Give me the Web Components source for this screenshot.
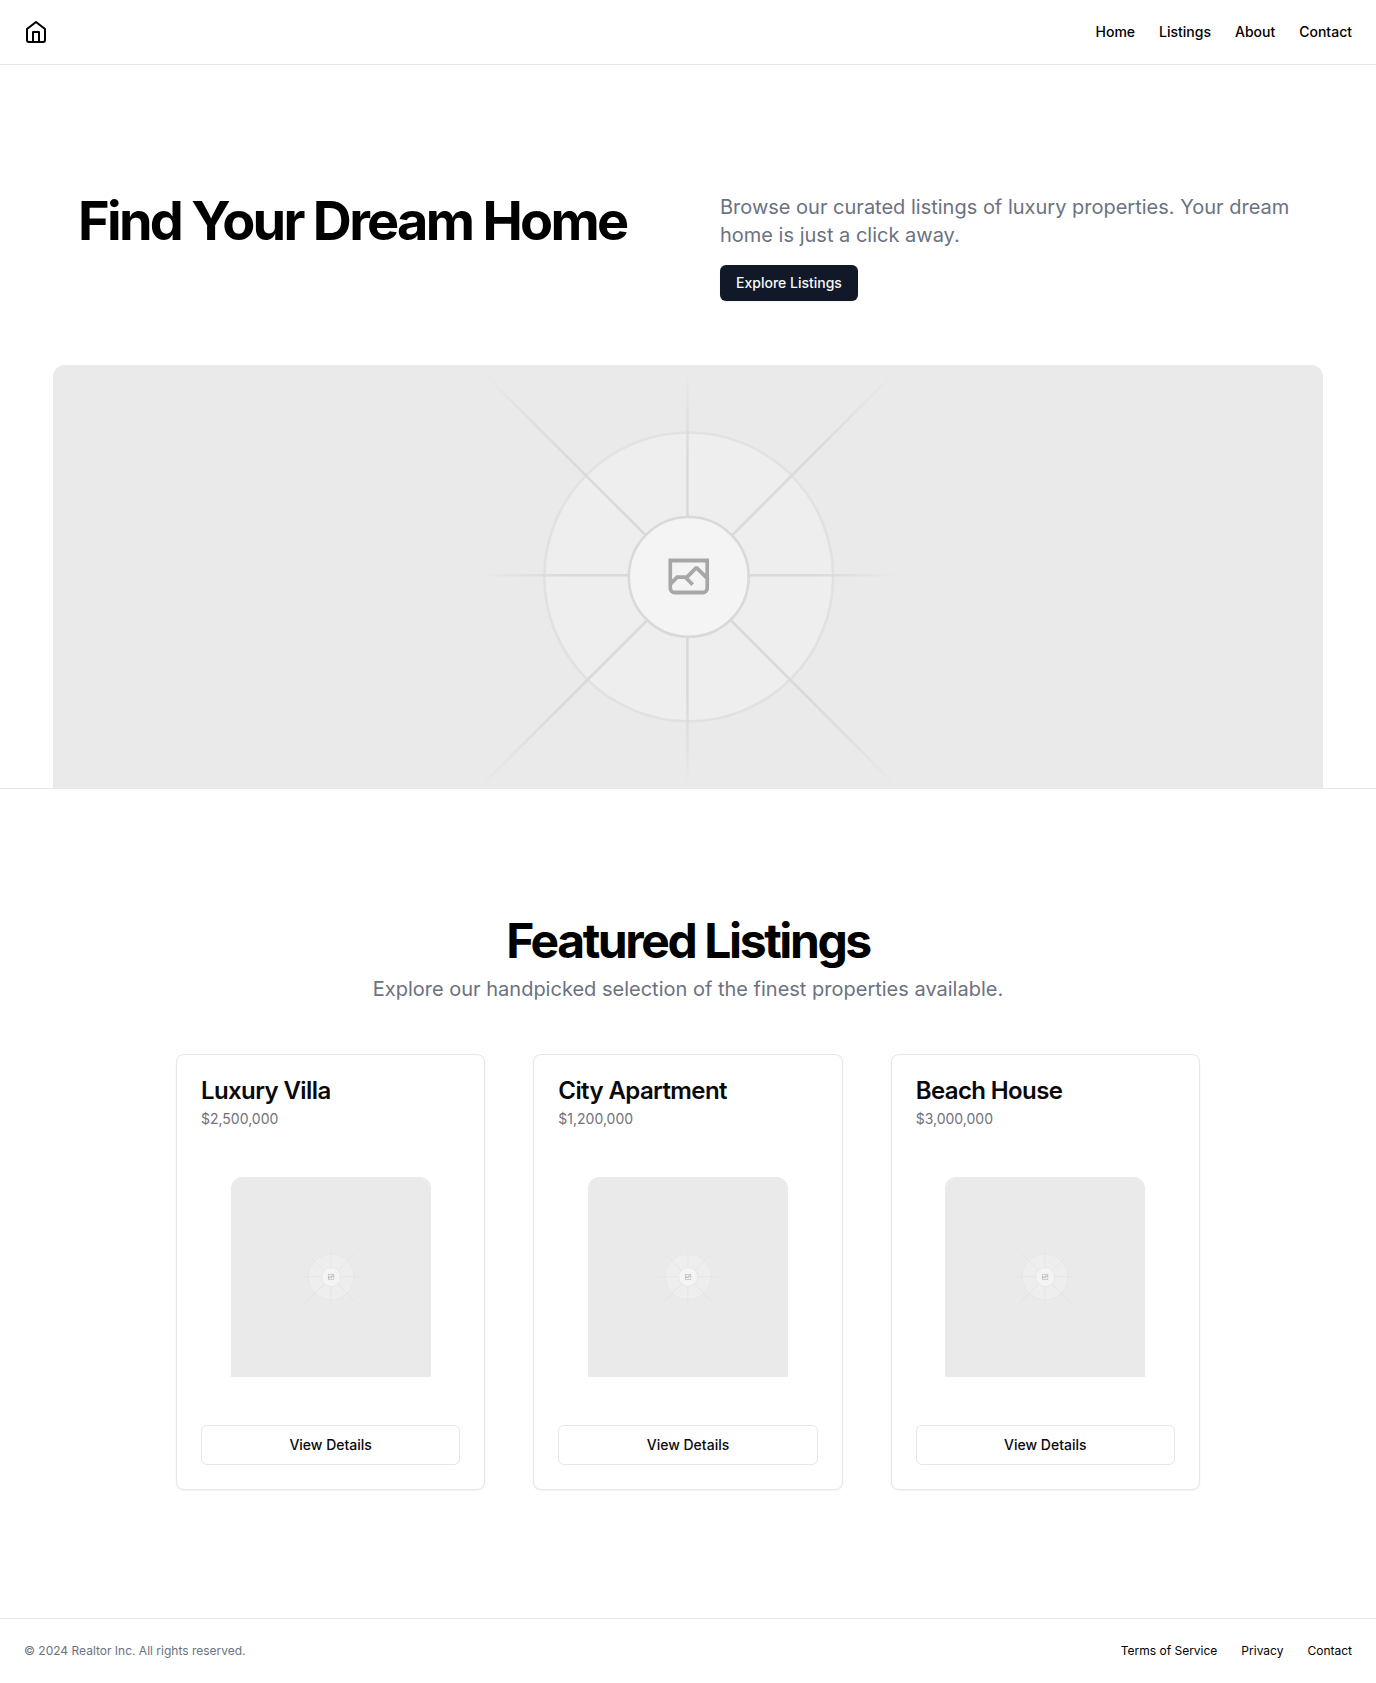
<!DOCTYPE html>
<html lang="en">
<head>
<meta charset="utf-8">
<meta name="viewport" content="width=device-width, initial-scale=1">
<title>Realtor Inc.</title>
<style>
  :root {
    --fg: #09090b;
    --muted: #6b7280;
    --muted-card: #71717a;
    --border: #e5e7eb;
    --tracking-heading: -0.05em;
  }
  body {
    margin: 0;
    background: #fff;
    color: #000;
    font: 400 16px/24px Inter, "Liberation Sans", sans-serif;
  }
</style>
</head>
<body>
<realtor-page>
  <site-header>
    <nav-link href="#home">Home</nav-link>
    <nav-link href="#listings">Listings</nav-link>
    <nav-link href="#about">About</nav-link>
    <nav-link href="#contact">Contact</nav-link>
  </site-header>
  <hero-section id="home">
    <span slot="title">Find Your Dream Home</span>
    <span slot="text">Browse our curated listings of luxury properties. Your dream home is just a click away.</span>
    <span slot="action">Explore Listings</span>
  </hero-section>
  <featured-listings id="listings">
    <span slot="title">Featured Listings</span>
    <span slot="text">Explore our handpicked selection of the finest properties available.</span>
    <listing-card><span slot="name">Luxury Villa</span><span slot="price">$2,500,000</span></listing-card>
    <listing-card><span slot="name">City Apartment</span><span slot="price">$1,200,000</span></listing-card>
    <listing-card><span slot="name">Beach House</span><span slot="price">$3,000,000</span></listing-card>
  </featured-listings>
  <site-footer>
    <span slot="copyright">© 2024 Realtor Inc. All rights reserved.</span>
    <nav-link href="#terms">Terms of Service</nav-link>
    <nav-link href="#privacy">Privacy</nav-link>
    <nav-link href="#contact">Contact</nav-link>
  </site-footer>
</realtor-page>

<script>
  function component(name, markup) {
    const template = document.createElement('template');
    template.innerHTML = markup;
    customElements.define(name, class extends HTMLElement {
      constructor() {
        super();
        this.attachShadow({ mode: 'open' }).append(template.content.cloneNode(true));
      }
      connectedCallback() {
        const link = this.hasAttribute('href') && this.shadowRoot.querySelector('a');
        if (link) link.href = this.getAttribute('href');
      }
    });
  }

  component('realtor-page', `
    <style>
      :host { display: flex; flex-direction: column; min-height: 100vh; }
    </style>
    <slot></slot>`);

  component('nav-link', `
    <style>
      :host { display: block; }
      a { display: block; color: inherit; text-decoration: none; }
      a:hover { text-decoration: underline; text-underline-offset: 4px; }
    </style>
    <a href="#"><slot></slot></a>`);

  component('site-header', `
    <style>
      :host { display: block; }
      header { display: flex; align-items: center; justify-content: space-between; height: 64px; padding: 0 24px; }
      .logo { display: block; color: #000; }
      svg { display: block; width: 24px; height: 24px; }
      nav { display: flex; gap: 24px; font-size: 14px; line-height: 20px; font-weight: 500; }
    </style>
    <header>
      <a class="logo" href="#home" aria-label="Realtor Inc.">
        <svg viewBox="0 0 24 24" fill="none" stroke="currentColor" stroke-width="2" stroke-linecap="round" stroke-linejoin="round" aria-hidden="true">
          <path d="m3 9 9-7 9 7v11a2 2 0 0 1-2 2H5a2 2 0 0 1-2-2z"/>
          <polyline points="9 22 9 12 15 12 15 22"/>
        </svg>
      </a>
      <nav aria-label="Main"><slot></slot></nav>
    </header>`);

  component('placeholder-image', `
    <style>
      :host { display: block; overflow: hidden; border-radius: 12px 12px 0 0; background: #eaeaea; }
      svg { display: block; width: 100%; height: 100%; }
    </style>
    <svg viewBox="0 0 1200 1200" preserveAspectRatio="xMidYMid slice" fill="none" aria-hidden="true">
      <defs>
        <linearGradient id="a" x1="554.061" x2="-.48" y1=".083" y2=".087" gradientUnits="userSpaceOnUse">
          <stop stop-color="#C9C9C9" stop-opacity="0"/><stop offset=".208" stop-color="#C9C9C9"/><stop offset=".792" stop-color="#C9C9C9"/><stop offset="1" stop-color="#C9C9C9" stop-opacity="0"/>
        </linearGradient>
        <linearGradient id="b" x1="796.912" x2="404.507" y1="599.963" y2="599.965" gradientUnits="userSpaceOnUse">
          <stop stop-color="#C9C9C9" stop-opacity="0"/><stop offset=".208" stop-color="#C9C9C9"/><stop offset=".792" stop-color="#C9C9C9"/><stop offset="1" stop-color="#C9C9C9" stop-opacity="0"/>
        </linearGradient>
        <linearGradient id="c" x1="600.792" x2="600.794" y1="403.677" y2="796.082" gradientUnits="userSpaceOnUse">
          <stop stop-color="#C9C9C9" stop-opacity="0"/><stop offset=".208" stop-color="#C9C9C9"/><stop offset=".792" stop-color="#C9C9C9"/><stop offset="1" stop-color="#C9C9C9" stop-opacity="0"/>
        </linearGradient>
        <linearGradient id="d" x1="404.85" x2="796.972" y1="403.903" y2="796.02" gradientUnits="userSpaceOnUse">
          <stop stop-color="#C9C9C9" stop-opacity="0"/><stop offset=".208" stop-color="#C9C9C9"/><stop offset=".792" stop-color="#C9C9C9"/><stop offset="1" stop-color="#C9C9C9" stop-opacity="0"/>
        </linearGradient>
        <clipPath id="e"><path d="M581.364 580.535h38.689v38.689h-38.689z"/></clipPath>
      </defs>
      <rect width="1200" height="1200" fill="#EAEAEA" rx="3"/>
      <g opacity=".5" stroke-width="2.418">
        <g opacity=".5">
          <circle cx="600.709" cy="599.88" r="136.62" fill="#FAFAFA"/>
          <circle cx="600.709" cy="600.2" r="136.4" stroke="#C9C9C9"/>
        </g>
        <path stroke="url(#a)" d="M0-1.209h553.581" transform="scale(1 -1) rotate(45 1163.11 91.165)"/>
        <path stroke="url(#b)" d="M404.846 598.671h391.726"/>
        <path stroke="url(#c)" d="M599.5 795.742V404.017"/>
        <path stroke="url(#d)" d="m795.717 796.597-391.441-391.44"/>
        <circle cx="600.709" cy="600.2" r="56.824" fill="#fff"/>
        <g clip-path="url(#e)">
          <path fill="#666" fill-rule="evenodd" clip-rule="evenodd" d="M616.426 586.58h-31.434v16.176l3.553-3.554.531-.531h9.068l.074-.074 8.463-8.463h2.565l7.18 7.181V586.58Zm-15.715 14.654 3.698 3.699 1.283 1.282-2.565 2.565-1.282-1.283-5.2-5.199h-6.066l-5.514 5.514-.073.073v2.876a2.418 2.418 0 0 0 2.418 2.418h26.598a2.418 2.418 0 0 0 2.418-2.418v-8.317l-8.463-8.463-7.181 7.181-.071.072Zm-19.347 5.442v4.085a6.045 6.045 0 0 0 6.046 6.045h26.598a6.044 6.044 0 0 0 6.045-6.045v-7.108l1.356-1.355-1.282-1.283-.074-.073v-17.989h-38.689v23.43l-.146.146.146.147Z"/>
        </g>
        <circle cx="600.709" cy="600.2" r="56.6" stroke="#C9C9C9"/>
      </g>
    </svg>`);

  component('hero-section', `
    <style>
      :host { display: block; }
      section { border-top: 1px solid var(--border); border-bottom: 1px solid var(--border); padding-top: 128px; display: flex; flex-direction: column; gap: 64px; }
      .intro { box-sizing: border-box; width: 100%; max-width: 1300px; margin: 0 auto; padding: 0 40px; display: grid; grid-template-columns: 1fr 1fr; gap: 64px; }
      h1 { margin: 0; font-size: 54px; line-height: 55px; font-weight: 700; letter-spacing: var(--tracking-heading); }
      .copy { display: flex; flex-direction: column; align-items: flex-start; gap: 16px; }
      p { margin: 0; font-size: 20px; line-height: 28px; color: var(--muted); }
      a { display: flex; align-items: center; height: 36px; padding: 0 16px; border-radius: 6px; background: #111827; color: #f9fafb; font-size: 14px; line-height: 20px; font-weight: 500; text-decoration: none; box-shadow: 0 1px 2px rgba(0, 0, 0, .05); }
      placeholder-image { width: 100%; max-width: 1270px; aspect-ratio: 3 / 1; margin: 0 auto; }
      @media (max-width: 767px) { .intro { grid-template-columns: 1fr; gap: 16px; padding: 0 24px; } }
    </style>
    <section>
      <div class="intro">
        <h1><slot name="title"></slot></h1>
        <div class="copy">
          <p><slot name="text"></slot></p>
          <a href="#listings"><slot name="action"></slot></a>
        </div>
      </div>
      <placeholder-image></placeholder-image>
    </section>`);

  component('featured-listings', `
    <style>
      :host { display: block; flex: 1; }
      section { padding: 128px 24px; display: flex; flex-direction: column; gap: 48px; }
      .intro { display: flex; flex-direction: column; gap: 8px; text-align: center; }
      h2 { margin: 0; font-size: 48px; line-height: 48px; font-weight: 700; letter-spacing: var(--tracking-heading); }
      p { margin: 0; font-size: 20px; line-height: 33px; color: var(--muted); }
      .cards { width: 100%; max-width: 1024px; margin: 0 auto; display: grid; grid-template-columns: repeat(3, 1fr); gap: 48px; }
      @media (max-width: 1023px) { .cards { grid-template-columns: 1fr; } }
    </style>
    <section>
      <div class="intro">
        <h2><slot name="title"></slot></h2>
        <p><slot name="text"></slot></p>
      </div>
      <div class="cards"><slot></slot></div>
    </section>`);

  component('listing-card', `
    <style>
      :host { display: block; }
      article { display: flex; flex-direction: column; gap: 48px; padding: 24px; border: 1px solid var(--border); border-radius: 8px; background: #fff; color: var(--fg); box-shadow: 0 1px 2px rgba(0, 0, 0, .05); }
      .head { display: flex; flex-direction: column; gap: 6px; }
      h3 { margin: 0; font-size: 24px; line-height: 24px; font-weight: 600; letter-spacing: -0.025em; }
      p { margin: 0; font-size: 14px; line-height: 20px; color: var(--muted-card); }
      placeholder-image { width: 200px; height: 200px; margin: 0 auto; }
      button { height: 40px; padding: 0 16px; border: 1px solid var(--border); border-radius: 6px; background: #fff; color: inherit; font: inherit; font-size: 14px; line-height: 20px; font-weight: 500; cursor: pointer; }
    </style>
    <article>
      <div class="head">
        <h3><slot name="name"></slot></h3>
        <p><slot name="price"></slot></p>
      </div>
      <placeholder-image></placeholder-image>
      <button type="button">View Details</button>
    </article>`);

  component('site-footer', `
    <style>
      :host { display: block; }
      footer { display: flex; align-items: center; justify-content: space-between; padding: 24px; border-top: 1px solid var(--border); font-size: 12px; line-height: 16px; }
      p { margin: 0; color: var(--muted); }
      nav { display: flex; gap: 24px; }
    </style>
    <footer>
      <p><slot name="copyright"></slot></p>
      <nav aria-label="Footer"><slot></slot></nav>
    </footer>`);
</script>
</body>
</html>
